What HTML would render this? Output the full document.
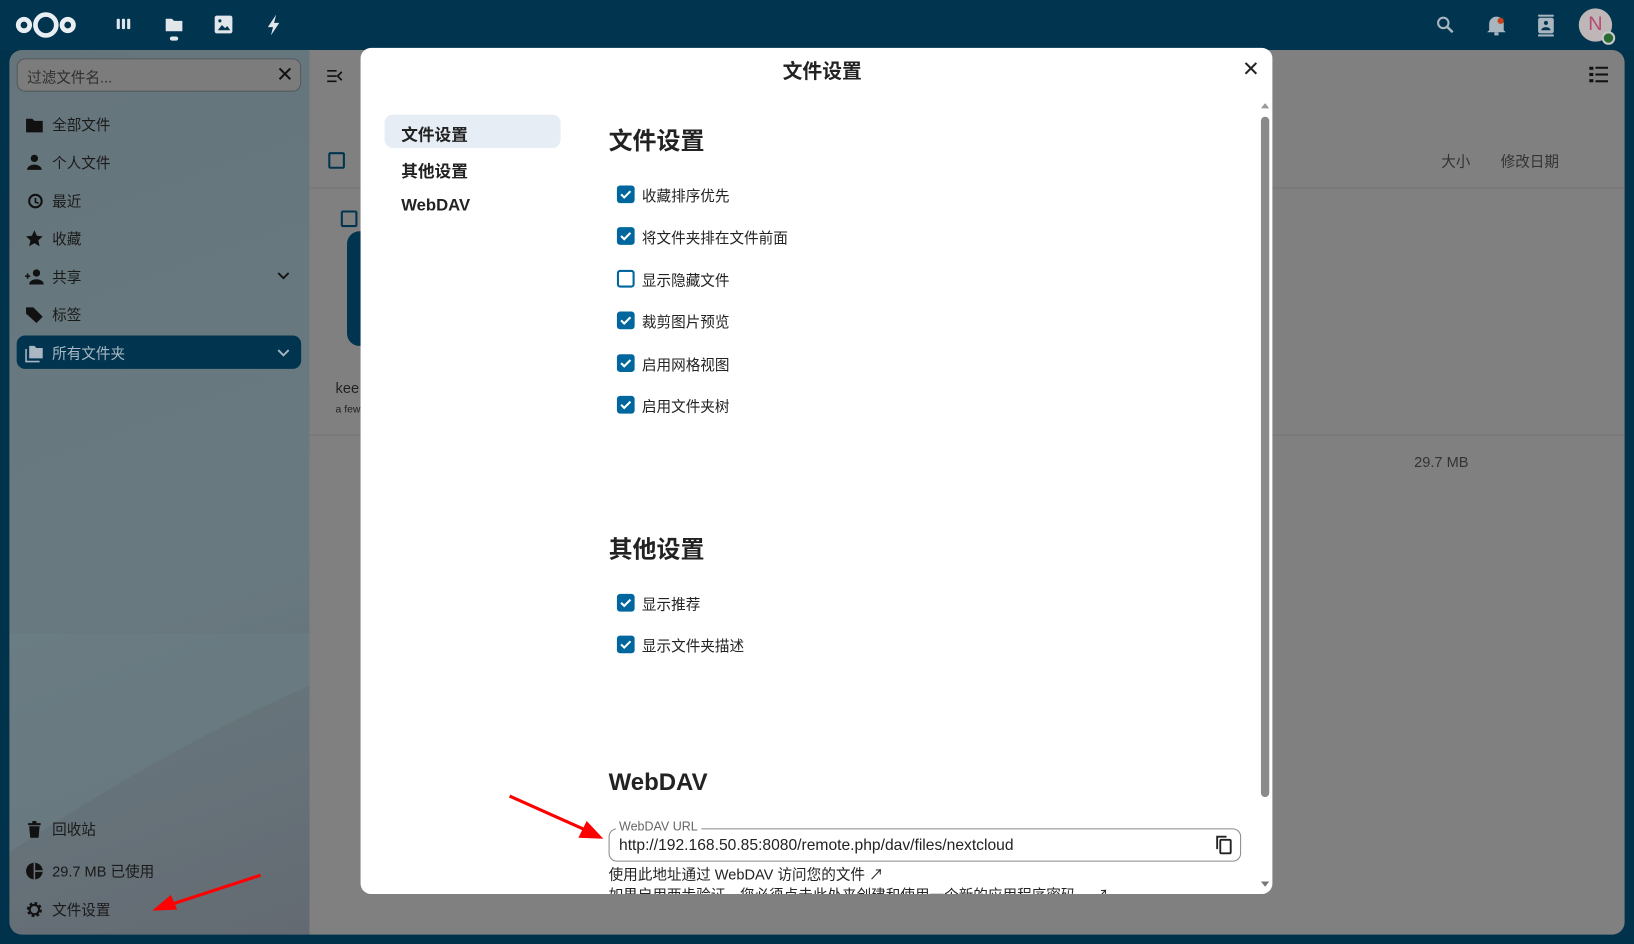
<!DOCTYPE html>
<html><head><meta charset="utf-8"><style>
*{box-sizing:border-box;margin:0;padding:0}
html,body{width:1634px;height:944px;overflow:hidden;background:#00324c}
#w{position:absolute;left:0;top:0;width:1568px;height:906px;transform:scale(1.04209,1.04194);transform-origin:0 0;font-family:"Liberation Sans","Noto Sans CJK SC",sans-serif;color:#222}
.a{position:absolute}
.top{left:0;top:0;width:1568px;height:48px;background:#00344f}
.side{left:9px;top:48px;width:288px;height:849px;border-radius:12px 0 0 12px;background:linear-gradient(160deg,#66757c 0%,#687a80 60%,#646a72 100%);overflow:hidden}
.main{left:297px;top:48px;width:1262px;height:849px;background:#808080;border-radius:0 12px 12px 0}
.nav{position:absolute;left:16px;font-size:14px;color:#1a1a1a;display:flex;align-items:center;gap:8px}
.nav svg{width:18px;height:18px}
.cb{position:absolute;left:592px;width:17px;height:17px;border-radius:3px;background:#00679e}
.cb.off{background:#fff;border:2px solid #00679e}
.cb svg{position:absolute;left:2px;top:2px}
.lab{position:absolute;left:616px;font-size:14px;color:#222}
.h{position:absolute;left:584px;font-size:23px;font-weight:bold;color:#222}
</style></head><body><div id="w">
<div class="a top"></div>
<svg class="a" style="left:14px;top:8px" width="62" height="32" viewBox="0 0 62 32"><g fill="none" stroke="#e9eef2" stroke-width="4.5"><circle cx="9" cy="16" r="5.5"/><circle cx="30" cy="16" r="10"/><circle cx="51" cy="16" r="5.5"/></g></svg>
<svg class="a" style="left:111px;top:16px" width="16" height="14"><g fill="#e0e6ea"><rect x="1" y="2" width="3" height="10" rx="1"/><rect x="6" y="2" width="3" height="10" rx="1"/><rect x="11" y="2" width="3" height="10" rx="1"/></g></svg>
<svg class="a" style="left:157px;top:14px" width="20" height="28"><path d="M2 4h6l2 2h8v10H2z" fill="#e0e6ea"/><rect x="6" y="21" width="8" height="4" rx="2" fill="#e0e6ea"/></svg>
<svg class="a" style="left:205px;top:14px" width="20" height="20"><rect x="1" y="1" width="17" height="17" rx="2" fill="#e0e6ea"/><path d="M4 15l4-5 3 3 2-2 3 4z" fill="#00344f"/><circle cx="6" cy="6" r="1.5" fill="#00344f"/></svg>
<svg class="a" style="left:255px;top:13px" width="16" height="22"><path d="M10 1L2 13h5l-2 8 8-12H8z" fill="#e0e6ea"/></svg>
<svg class="a" style="left:1378px;top:15px" width="18" height="18"><circle cx="7" cy="7" r="5" fill="none" stroke="#a9b6bf" stroke-width="2"/><path d="M11 11l5 5" stroke="#a9b6bf" stroke-width="2.4"/></svg>
<svg class="a" style="left:1425px;top:13px" width="22" height="22"><path d="M4 16V10a7 7 0 0114 0v6l2 2H2z" fill="#a9b6bf"/><rect x="9" y="18" width="4" height="3" fill="#a9b6bf"/><circle cx="15" cy="7" r="3" fill="#c9421a"/></svg>
<svg class="a" style="left:1473px;top:14px" width="20" height="22"><rect x="3" y="3" width="15" height="15" rx="2" fill="#a9b6bf"/><rect x="3" y="0" width="15" height="2" fill="#a9b6bf"/><rect x="3" y="19" width="15" height="2" fill="#a9b6bf"/><circle cx="10.5" cy="8" r="2" fill="#00344f"/><path d="M6 15a4.5 3 0 019 0z" fill="#00344f"/></svg>
<div class="a" style="left:1515px;top:8px;width:32px;height:32px;border-radius:50%;background:#bfb6b8;color:#b64a72;font-size:19px;text-align:center;line-height:32px">N</div>
<div class="a" style="left:1537px;top:30px;width:13px;height:13px;border-radius:50%;background:#2a6b33;border:2px solid #c9c9c9"></div>

<div class="a side">
 <svg class="a" style="left:0;top:560px" width="288" height="300"><path d="M0 210 Q150 110 288 50 L288 0 L0 0Z" fill="#6b7f85" opacity=".5"/></svg>
 <div class="a" style="left:7px;top:8px;width:273px;height:32px;border:1px solid #55595c;border-radius:8px;background:#7c7c7c"></div>
 <div class="a" style="left:17px;top:16px;font-size:14px;color:#2f2f2f">过滤文件名...</div>
 <div class="a" style="left:256px;top:11px;font-size:20px;color:#111">✕</div>
 <div class="a" style="left:7px;top:274px;width:273px;height:32px;border-radius:8px;background:#00344f"></div>
</div>
<div class="nav a" style="left:24px;top:110px"><svg viewBox="0 0 18 18"><path d="M1 3h6l2 2h8v11H1z" fill="#111"/></svg>全部文件</div>
<div class="nav a" style="left:24px;top:146px"><svg viewBox="0 0 18 18"><circle cx="9" cy="5" r="3.5" fill="#111"/><path d="M2 16a7 5 0 0114 0z" fill="#111"/></svg>个人文件</div>
<div class="nav a" style="left:24px;top:183px"><svg viewBox="0 0 18 18"><circle cx="10" cy="9" r="6" fill="none" stroke="#111" stroke-width="2"/><path d="M10 6v4l3 1" stroke="#111" stroke-width="1.6" fill="none"/></svg>最近</div>
<div class="nav a" style="left:24px;top:219px"><svg viewBox="0 0 18 18"><path d="M9 1l2.4 5.3 5.6.6-4.2 3.8 1.2 5.6L9 13.4 4 16.3l1.2-5.6L1 6.9l5.6-.6z" fill="#111"/></svg>收藏</div>
<div class="nav a" style="left:24px;top:256px"><svg viewBox="0 0 18 18"><circle cx="11" cy="5" r="3.5" fill="#111"/><path d="M4 16a7 5 0 0114 0z" fill="#111"/><path d="M0 8h5M2.5 5.5v5" stroke="#111" stroke-width="1.5"/></svg>共享</div>
<svg class="a" style="left:266px;top:261px" width="12" height="8"><path d="M1 1l5 5 5-5" stroke="#111" stroke-width="1.8" fill="none"/></svg>
<div class="nav a" style="left:24px;top:292px"><svg viewBox="0 0 18 18"><path d="M1 2h7l9 9-6 6-10-9z" fill="#111"/></svg>标签</div>
<div class="nav a" style="left:24px;top:329px;color:#a9b7c2"><svg viewBox="0 0 18 18"><path d="M1 5v12h13" fill="none" stroke="#a9b7c2" stroke-width="1.5"/><path d="M4 2h5l2 2h6v10H4z" fill="#a9b7c2"/></svg>所有文件夹</div>
<svg class="a" style="left:266px;top:335px" width="12" height="8"><path d="M1 1l5 5 5-5" stroke="#a9b7c2" stroke-width="1.8" fill="none"/></svg>
<div class="nav a" style="left:24px;top:786px"><svg viewBox="0 0 18 18"><path d="M3 3h12v2H3zM7 1h4v2H7zM4 6h10l-1 11H5z" fill="#111"/></svg>回收站</div>
<div class="nav a" style="left:24px;top:826px"><svg viewBox="0 0 18 18"><circle cx="9" cy="9" r="8" fill="#111"/><path d="M9 1v16M9 9h8" stroke="#66717a" stroke-width="1.5"/></svg>29.7 MB 已使用</div>
<div class="nav a" style="left:24px;top:863px"><svg viewBox="0 0 18 18"><circle cx="9" cy="9" r="5.5" fill="none" stroke="#111" stroke-width="3.5" stroke-dasharray="2.4 1.9"/><circle cx="9" cy="9" r="4.5" fill="none" stroke="#111" stroke-width="2"/></svg>文件设置</div>
<svg class="a" style="left:140px;top:835px" width="120" height="45"><path d="M110 5L18 35" stroke="#f00" stroke-width="3"/><path d="M6 39l18-15 6 14z" fill="#f00"/></svg>

<div class="a main">
 <svg class="a" style="left:16px;top:18px" width="16" height="14"><path d="M1 2h9M1 7h9M1 12h9M15 3l-4 4 4 4" stroke="#111" stroke-width="1.6" fill="none"/></svg>
 <div class="a" style="left:18px;top:98px;width:16px;height:16px;border:2px solid #00344f;border-radius:2px"></div>
 <div class="a" style="left:0;top:132px;width:1262px;height:1px;background:#757575"></div>
 <div class="a" style="left:30px;top:154px;width:16px;height:16px;border:2px solid #00344f;border-radius:2px"></div>
 <div class="a" style="left:36px;top:174px;width:40px;height:110px;background:#00344f;border-radius:12px"></div>
 <div class="a" style="left:25px;top:316px;font-size:14px;color:#222">kee</div>
 <div class="a" style="left:25px;top:340px;font-size:10px;color:#222">a few</div>
 <div class="a" style="left:0;top:369px;width:1262px;height:1px;background:#757575"></div>
 <div class="a" style="left:1086px;top:97px;font-size:14px;color:#333">大小</div>
 <div class="a" style="left:1143px;top:97px;font-size:14px;color:#333">修改日期</div>
 <div class="a" style="left:1060px;top:387px;font-size:14px;color:#333">29.7 MB</div>
 <svg class="a" style="left:1228px;top:16px" width="20" height="16"><g fill="#111"><rect x="0" y="0" width="4" height="3"/><rect x="0" y="6" width="4" height="3"/><rect x="0" y="12" width="4" height="3"/><rect x="6" y="0" width="12" height="2"/><rect x="6" y="6.5" width="12" height="2"/><rect x="6" y="13" width="12" height="2"/></g></svg>
</div>

<div class="a" style="left:346px;top:46px;width:875px;height:812px;background:#fff;border-radius:10px;overflow:hidden">
 <div class="a" style="left:0;top:8px;width:886px;text-align:center;font-size:19px;font-weight:bold;color:#222">文件设置</div>
 <div class="a" style="left:846px;top:8px;font-size:20px;color:#222">✕</div>
 <div class="a" style="left:23px;top:64px;width:169px;height:32px;background:#e6edf4;border-radius:8px"></div>
 <div class="a" style="left:39px;top:70px;font-size:16px;font-weight:bold;color:#222">文件设置</div>
 <div class="a" style="left:39px;top:105px;font-size:16px;font-weight:bold;color:#222">其他设置</div>
 <div class="a" style="left:39px;top:143px;font-size:16px;font-weight:bold;color:#222">WebDAV</div>
 <div class="a" style="left:864px;top:53px;width:0;height:0;border-left:4px solid transparent;border-right:4px solid transparent;border-bottom:5px solid #999"></div>
 <div class="a" style="left:864px;top:66px;width:8px;height:653px;background:#8a8a8a;border-radius:4px"></div>
 <div class="a" style="left:864px;top:800px;width:0;height:0;border-left:4px solid transparent;border-right:4px solid transparent;border-top:5px solid #777"></div>
</div>
<div class="h" style="top:116px">文件设置</div>
<div class="h" style="top:508px">其他设置</div>
<div class="h" style="top:737px">WebDAV</div>
<div class="cb" style="top:178px"><svg width="13" height="13"><path d="M2 6.5l3 3 6-6" stroke="#fff" stroke-width="2" fill="none"/></svg></div><div class="lab" style="top:178px">收藏排序优先</div>
<div class="cb" style="top:218px"><svg width="13" height="13"><path d="M2 6.5l3 3 6-6" stroke="#fff" stroke-width="2" fill="none"/></svg></div><div class="lab" style="top:218px">将文件夹排在文件前面</div>
<div class="cb off" style="top:259px"></div><div class="lab" style="top:259px">显示隐藏文件</div>
<div class="cb" style="top:299px"><svg width="13" height="13"><path d="M2 6.5l3 3 6-6" stroke="#fff" stroke-width="2" fill="none"/></svg></div><div class="lab" style="top:299px">裁剪图片预览</div>
<div class="cb" style="top:340px"><svg width="13" height="13"><path d="M2 6.5l3 3 6-6" stroke="#fff" stroke-width="2" fill="none"/></svg></div><div class="lab" style="top:340px">启用网格视图</div>
<div class="cb" style="top:380px"><svg width="13" height="13"><path d="M2 6.5l3 3 6-6" stroke="#fff" stroke-width="2" fill="none"/></svg></div><div class="lab" style="top:380px">启用文件夹树</div>
<div class="cb" style="top:570px"><svg width="13" height="13"><path d="M2 6.5l3 3 6-6" stroke="#fff" stroke-width="2" fill="none"/></svg></div><div class="lab" style="top:570px">显示推荐</div>
<div class="cb" style="top:610px"><svg width="13" height="13"><path d="M2 6.5l3 3 6-6" stroke="#fff" stroke-width="2" fill="none"/></svg></div><div class="lab" style="top:610px">显示文件夹描述</div>
<div class="a" style="left:584px;top:795px;width:607px;height:32px;border:1px solid #8a8a8a;border-radius:8px"></div>
<div class="a" style="left:591px;top:786px;padding:0 3px;background:#fff;font-size:12px;color:#666">WebDAV URL</div>
<div class="a" style="left:594px;top:803px;font-size:15px;color:#222">http://192.168.50.85:8080/remote.php/dav/files/nextcloud</div>
<svg class="a" style="left:1166px;top:801px" width="18" height="20"><rect x="5" y="5" width="10" height="13" rx="1" fill="none" stroke="#222" stroke-width="1.8"/><path d="M2 14V2h9" fill="none" stroke="#222" stroke-width="1.8"/></svg>
<div class="a" style="left:584px;top:829px;font-size:14px;color:#222">使用此地址通过 WebDAV 访问您的文件 ↗</div>
<div class="a" style="left:346px;top:849px;width:875px;height:9px;overflow:hidden"><div style="position:absolute;left:238px;top:0;font-size:14px;color:#222;white-space:nowrap">如果启用两步验证，您必须点击此处来创建和使用一个新的应用程序密码。 ↗</div></div>
<svg class="a" style="left:485px;top:760px" width="100" height="50"><path d="M4 4L80 38" stroke="#f00" stroke-width="3"/><path d="M94 45L70 44 78 28z" fill="#f00"/></svg>
</div></body></html>
